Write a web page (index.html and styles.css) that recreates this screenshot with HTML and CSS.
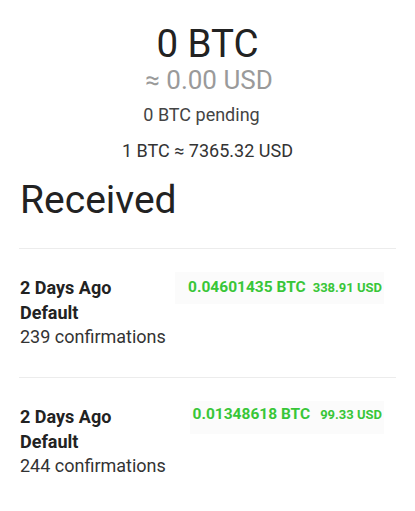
FILE: index.html
```html
<!DOCTYPE html>
<html>
<head>
<meta charset="utf-8">
<link rel="stylesheet" href="styles.css">
</head>
<body>
<div class="page">
  <div class="summary">
    <div class="balance">0 BTC</div>
    <div class="fiat">≈ 0.00 USD</div>
    <div class="pending">0 BTC pending</div>
    <div class="rate">1 BTC ≈ 7365.32 USD</div>
  </div>
  <h1 class="title">Received</h1>
  <ul class="txs">
    <li class="tx">
      <div class="tx-info">
        <div class="tx-date">2 Days Ago</div>
        <div class="tx-label">Default</div>
        <div class="tx-conf">239 confirmations</div>
      </div>
      <div class="tx-amount tx-amount-a">
        <span class="btc">0.04601435 BTC</span>
        <span class="usd">338.91 USD</span>
      </div>
    </li>
    <li class="tx">
      <div class="tx-info">
        <div class="tx-date">2 Days Ago</div>
        <div class="tx-label">Default</div>
        <div class="tx-conf">244 confirmations</div>
      </div>
      <div class="tx-amount tx-amount-b">
        <span class="btc">0.01348618 BTC</span>
        <span class="usd">99.33 USD</span>
      </div>
    </li>
  </ul>
</div>
</body>
</html>
```

FILE: styles.css
```css
* { box-sizing: border-box; }
html, body { margin: 0; padding: 0; background: #ffffff; }
body {
  font-family: Roboto, "Liberation Sans", sans-serif;
  color: #222;
}
.page {
  padding: 22px 19px 0 19px;
}
.summary {
  display: flex;
  flex-direction: column;
  align-items: center;
}
.balance {
  font-size: 38.5px;
  line-height: 44px;
  color: #222;
}
.fiat {
  font-size: 26px;
  line-height: 28px;
  color: #9a9a9a;
  margin-left: 3px;
}
.pending {
  margin-top: 11px;
  margin-right: 12px;
  font-size: 18px;
  line-height: 20px;
  color: #444;
}
.rate {
  margin-top: 16px;
  font-size: 18px;
  line-height: 20px;
  color: #333;
}
.title {
  margin: 17px 0 0 1px;
  font-size: 39px;
  line-height: 44px;
  font-weight: 400;
  color: #222;
}
.txs {
  list-style: none;
  margin: 26px 0 0 0;
  padding: 0;
}
.tx {
  border-top: 1px solid #ececec;
  display: flex;
  justify-content: space-between;
  align-items: flex-start;
  padding: 27px 12px 28px 1px;
}
.tx-date, .tx-label {
  font-size: 18px;
  line-height: 24px;
  font-weight: 700;
  color: #222;
}
.tx-label { line-height: 25px; }
.tx-conf {
  font-size: 18px;
  line-height: 24px;
  color: #333;
}
.tx-amount {
  margin-top: -4px;
  background: #fbfbfb;
  padding: 3px 2px 5px 13px;
  color: #38c638;
  font-weight: 700;
  white-space: nowrap;
  line-height: 23px;
}
.tx-amount-b {
  padding-left: 3px;
  padding-top: 1px;
  padding-bottom: 8px;
}
.btc { font-size: 15.5px; }
.usd { font-size: 13px; margin-left: 3px; }
.tx-amount-b .usd { margin-left: 6px; }
```
